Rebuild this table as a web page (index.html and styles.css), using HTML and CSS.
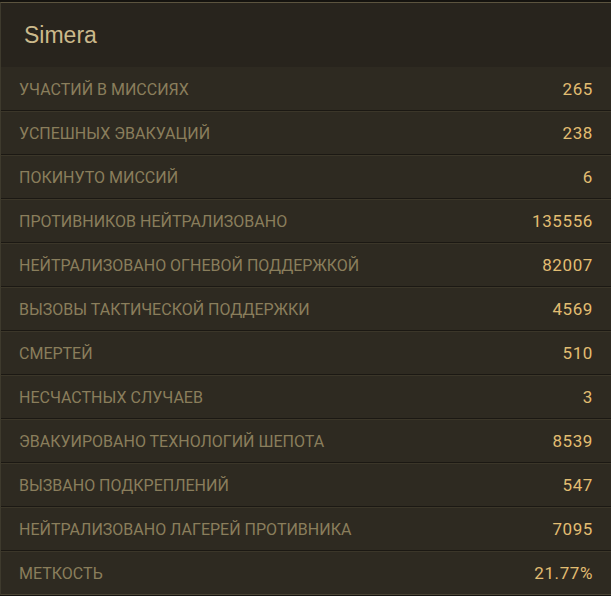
FILE: index.html
```html
<!DOCTYPE html>
<html lang="ru">
<head>
<meta charset="utf-8">
<link rel="stylesheet" href="styles.css">
</head>
<body>
<section class="panel">
  <header class="panel-head"><h1 class="title">Simera</h1></header>
  <ul class="stats">
    <li class="row"><span class="label">УЧАСТИЙ В МИССИЯХ</span><span class="value">265</span></li>
    <li class="row"><span class="label">УСПЕШНЫХ ЭВАКУАЦИЙ</span><span class="value">238</span></li>
    <li class="row"><span class="label">ПОКИНУТО МИССИЙ</span><span class="value">6</span></li>
    <li class="row"><span class="label">ПРОТИВНИКОВ НЕЙТРАЛИЗОВАНО</span><span class="value">135556</span></li>
    <li class="row"><span class="label">НЕЙТРАЛИЗОВАНО ОГНЕВОЙ ПОДДЕРЖКОЙ</span><span class="value">82007</span></li>
    <li class="row"><span class="label">ВЫЗОВЫ ТАКТИЧЕСКОЙ ПОДДЕРЖКИ</span><span class="value">4569</span></li>
    <li class="row"><span class="label">СМЕРТЕЙ</span><span class="value">510</span></li>
    <li class="row"><span class="label">НЕСЧАСТНЫХ СЛУЧАЕВ</span><span class="value">3</span></li>
    <li class="row"><span class="label">ЭВАКУИРОВАНО ТЕХНОЛОГИЙ ШЕПОТА</span><span class="value">8539</span></li>
    <li class="row"><span class="label">ВЫЗВАНО ПОДКРЕПЛЕНИЙ</span><span class="value">547</span></li>
    <li class="row"><span class="label">НЕЙТРАЛИЗОВАНО ЛАГЕРЕЙ ПРОТИВНИКА</span><span class="value">7095</span></li>
    <li class="row"><span class="label">МЕТКОСТЬ</span><span class="value">21.77%</span></li>
  </ul>
</section>
</body>
</html>
```

FILE: styles.css
```css
html, body {
  margin: 0;
  padding: 0;
  background: #15130f;
}
body {
  padding-top: 2px;
  font-family: "Roboto", "Liberation Sans", sans-serif;
}
.panel {
  border-top: 1px solid #5c543f;
  border-left: 1px solid #3e3a2d;
  border-bottom: 1px solid #4a4434;
  background: #2e2a21;
}
.panel-head {
  height: 64px;
  background: #28241d;
  display: flex;
  align-items: center;
  padding-left: 23px;
}
.title {
  margin: 0;
  font-family: "Liberation Sans", sans-serif;
  font-weight: 400;
  font-size: 23px;
  color: #cbb98b;
}
.stats {
  list-style: none;
  margin: 0;
  padding: 0;
}
.row {
  box-sizing: border-box;
  height: 44px;
  display: flex;
  align-items: center;
  justify-content: space-between;
  padding: 0 18px 0 18px;
  border-bottom: 1px solid #1b1813;
  border-top: 1px solid #3b3629;
}
.row:first-child {
  border-top-color: #2e2a21;
}
.row:last-child {
  border-bottom: none;
  height: 43px;
}
.label {
  font-size: 16px;
  color: #8a7e5c;
}
.value {
  font-size: 17px;
  letter-spacing: 0.6px;
  color: #e2bd72;
}
```
